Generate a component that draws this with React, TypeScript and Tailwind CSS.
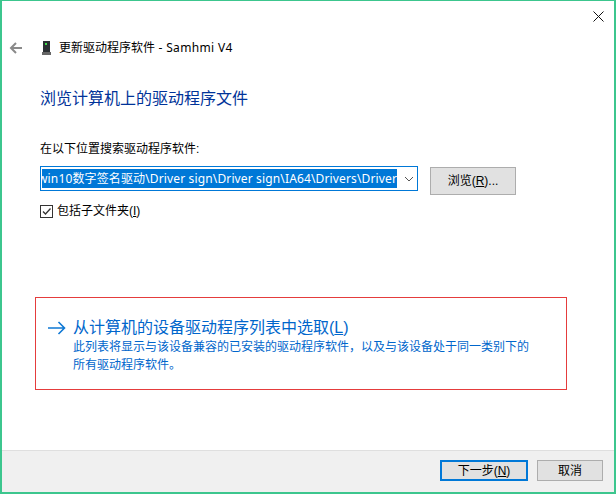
const cjk = "font-['Liberation_Sans','Noto_Sans_CJK_SC',sans-serif]"
const noto = "font-['Noto_Sans','Noto_Sans_CJK_SC',sans-serif]"

export default function App() {
  return (
    <div className={`flex h-[494px] w-[616px] flex-col overflow-hidden border-2 border-t border-[#3cc68e] bg-white text-[12px] leading-[16px] text-black ${cjk}`}>
      {/* Close */}
      <div className="flex h-[31px] shrink-0 justify-end pr-[10px] pt-[10px]">
        <svg width="11" height="11" viewBox="0 0 11 11" stroke="#111" strokeWidth="1" fill="none">
          <path d="M0.5 0.5l10 10M10.5 0.5l-10 10" />
        </svg>
      </div>

      {/* Title row */}
      <div className="flex h-[32px] shrink-0 items-center">
        <svg className="ml-[7px]" width="14" height="12" viewBox="0 0 14 12" fill="none" stroke="#8a8a8a" strokeWidth="2">
          <path d="M13 6H2M7 1L2 6l5 5" />
        </svg>
        <svg className="ml-[19px]" width="9" height="14" viewBox="0 0 9 14">
          <rect x="1" y="0" width="7" height="11" fill="#2b2f33" />
          <rect x="0" y="11" width="9" height="3" fill="#666" />
          <rect x="3" y="2" width="2" height="2" fill="#3fdc4a" />
        </svg>
        <span className={`ml-[8px] ${noto}`}>
          更新驱动程序软件<span className="tracking-[0.35px]"> - Samhmi V4</span>
        </span>
      </div>

      {/* Heading */}
      <h1 className="ml-[38px] mt-[23px] h-[24px] text-[16px] font-normal leading-[24px] text-[#003399]">
        浏览计算机上的驱动程序文件
      </h1>

      <div className="ml-[38px] mt-[30px]">在以下位置搜索驱动程序软件:</div>

      {/* Path row */}
      <div className="ml-[38px] mt-[9px] flex items-start">
        <div className="flex h-[25px] w-[378px] items-center border border-[#0078d7] p-[1px]">
          <div className={`h-[19px] w-[355px] overflow-hidden whitespace-nowrap bg-[#0078d7] text-[12px] leading-[19px] tracking-[0.14px] text-white ${noto}`} dir="rtl">
            <span dir="ltr">win10数字签名驱动\Driver sign\Driver sign\IA64\Drivers\Driver</span>
          </div>
          <svg className="ml-[7px]" width="10" height="6" viewBox="0 0 10 6" fill="none" stroke="#555" strokeWidth="1">
            <path d="M1 1l4 4 4-4" />
          </svg>
        </div>
        <button className="ml-[12px] mt-[1px] h-[28px] w-[86px] border border-[#adadad] bg-[#e1e1e1] text-[12px] text-black">
          浏览(<span className="underline">R</span>)...
        </button>
      </div>

      {/* Checkbox */}
      <div className="ml-[38px] mt-[8px] flex items-center">
        <span className="flex h-[13px] w-[13px] items-center justify-center border border-[#333] bg-white">
          <svg width="11" height="11" viewBox="0 0 11 11" fill="none" stroke="#333" strokeWidth="1.3">
            <path d="M2 5.5l2.5 2.5L9.5 2.5" />
          </svg>
        </span>
        <span className="ml-[4px]">包括子文件夹(<span className="underline">I</span>)</span>
      </div>

      {/* Pick from list */}
      <div className="ml-[33px] mt-[78px] flex h-[93px] w-[532px] shrink-0 border border-[#e53c3c] pl-[12px] pt-[20px]">
        <svg className="mt-[3px]" width="18" height="14" viewBox="0 0 18 14" fill="none" stroke="#0f78d4" strokeWidth="1.6">
          <path d="M0 7h16.5M10.5 1l6 6-6 6" />
        </svg>
        <div className="ml-[7px] text-[#0066cc]">
          <div className="text-[16px] leading-[20px]">从计算机的设备驱动程序列表中选取(<span className="underline">L</span>)</div>
          <div className="w-[460px] leading-[18px]">
            此列表将显示与该设备兼容的已安装的驱动程序软件，以及与该设备处于同一类别下的所有驱动程序软件。
          </div>
        </div>
      </div>

      {/* Footer */}
      <div className="mt-auto flex h-[42px] shrink-0 items-start justify-end border-t border-[#dfdfdf] bg-[#f0f0f0] pr-[11px] pt-[9px]">
        <button className="h-[21px] w-[88px] border-2 border-[#0078d7] bg-[#e1e1e1] text-[12px] leading-[16px] text-black">
          下一步(<span className="underline">N</span>)
        </button>
        <button className="ml-[9px] h-[21px] w-[66px] border border-[#adadad] bg-[#e1e1e1] text-[12px] leading-[16px] text-black">
          取消
        </button>
      </div>
    </div>
  )
}
